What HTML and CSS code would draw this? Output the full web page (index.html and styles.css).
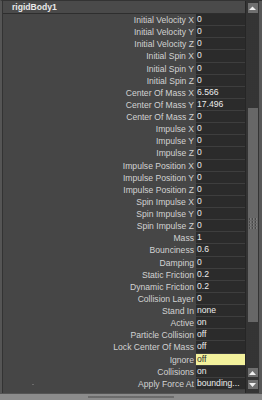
FILE: index.html
```html
<!DOCTYPE html>
<html>
<head>
<meta charset="utf-8">
<link rel="stylesheet" href="styles.css">
</head>
<body>
<div class="panel">
  <div class="frame">
    <div class="main">
      <div class="header">rigidBody1</div>
      <div class="rows">
        <div class="row"><span class="label">Initial Velocity X</span><span class="value">0</span></div>
        <div class="row"><span class="label">Initial Velocity Y</span><span class="value">0</span></div>
        <div class="row"><span class="label">Initial Velocity Z</span><span class="value">0</span></div>
        <div class="row"><span class="label">Initial Spin X</span><span class="value">0</span></div>
        <div class="row"><span class="label">Initial Spin Y</span><span class="value">0</span></div>
        <div class="row"><span class="label">Initial Spin Z</span><span class="value">0</span></div>
        <div class="row"><span class="label">Center Of Mass X</span><span class="value">6.566</span></div>
        <div class="row"><span class="label">Center Of Mass Y</span><span class="value">17.496</span></div>
        <div class="row"><span class="label">Center Of Mass Z</span><span class="value">0</span></div>
        <div class="row"><span class="label">Impulse X</span><span class="value">0</span></div>
        <div class="row"><span class="label">Impulse Y</span><span class="value">0</span></div>
        <div class="row"><span class="label">Impulse Z</span><span class="value">0</span></div>
        <div class="row"><span class="label">Impulse Position X</span><span class="value">0</span></div>
        <div class="row"><span class="label">Impulse Position Y</span><span class="value">0</span></div>
        <div class="row"><span class="label">Impulse Position Z</span><span class="value">0</span></div>
        <div class="row"><span class="label">Spin Impulse X</span><span class="value">0</span></div>
        <div class="row"><span class="label">Spin Impulse Y</span><span class="value">0</span></div>
        <div class="row"><span class="label">Spin Impulse Z</span><span class="value">0</span></div>
        <div class="row"><span class="label">Mass</span><span class="value">1</span></div>
        <div class="row"><span class="label">Bounciness</span><span class="value">0.6</span></div>
        <div class="row"><span class="label">Damping</span><span class="value">0</span></div>
        <div class="row"><span class="label">Static Friction</span><span class="value">0.2</span></div>
        <div class="row"><span class="label">Dynamic Friction</span><span class="value">0.2</span></div>
        <div class="row"><span class="label">Collision Layer</span><span class="value">0</span></div>
        <div class="row"><span class="label">Stand In</span><span class="value">none</span></div>
        <div class="row"><span class="label">Active</span><span class="value">on</span></div>
        <div class="row"><span class="label">Particle Collision</span><span class="value">off</span></div>
        <div class="row"><span class="label">Lock Center Of Mass</span><span class="value">off</span></div>
        <div class="row"><span class="label">Ignore</span><span class="value value-hl">off</span></div>
        <div class="row"><span class="label">Collisions</span><span class="value">on</span></div>
        <div class="row"><span class="label">Apply Force At</span><span class="value">bounding...</span></div>
      </div>
      <div class="dot"></div>
    </div>
    <div class="scrollbar">
      <div class="sb-btn sb-top"><svg width="7" height="5" viewBox="0 0 7 5"><path d="M0 4h7L3.5 0.5z" fill="#f0f0f0"/></svg></div>
      <div class="thumb">
        <div class="grip">
          <i></i><i></i><i></i><i></i><i></i><i></i>
          <i></i><i></i><i></i><i></i><i></i><i></i>
        </div>
      </div>
      <div class="sb-space"></div>
      <div class="sb-btn sb-up"><svg width="7" height="4" viewBox="0 0 7 4"><path d="M0 4h7L3.5 0z" fill="#f0f0f0"/></svg></div>
      <div class="sb-btn sb-down"><svg width="7" height="4" viewBox="0 0 7 4"><path d="M0 0h7L3.5 4z" fill="#f0f0f0"/></svg></div>
    </div>
  </div>
  <div class="bottom"><div class="bottom-grip"></div></div>
</div>
</body>
</html>
```
FILE: styles.css
```css
html, body {
  margin: 0;
  padding: 0;
  background: #3c3c3c;
}
.panel {
  width: 262px;
  height: 400px;
  display: flex;
  flex-direction: column;
  font-family: "Liberation Sans", Arial, sans-serif;
  font-size: 8.6px;
  overflow: hidden;
}
.frame {
  flex: 1;
  display: flex;
  background: #464646;
  border-left: 2px solid #555;
  border-top: 1px solid #333;
}
.main {
  flex: 1;
  display: flex;
  flex-direction: column;
  border-left: 1px solid #333;
  position: relative;
}
.header {
  height: 12px;
  line-height: 12px;
  padding-left: 9px;
  font-weight: bold;
  color: #e8e8e8;
  background: #4a4a4a;
  border-bottom: 1px solid #2e2e2e;
}
.rows {
  display: flex;
  flex-direction: column;
}
.row {
  height: 12.14px;
  display: grid;
  grid-template-columns: 1fr 49px;
  column-gap: 2px;
  align-items: stretch;
}
.label {
  text-align: right;
  color: #d2d2d2;
  line-height: 12px;
  white-space: nowrap;
}
.value {
  background: #2b2b2b;
  border-bottom: 1px solid #3e3e3e;
  color: #ececec;
  line-height: 11px;
  padding-left: 1px;
  white-space: nowrap;
  overflow: hidden;
}
.value-hl {
  background: #f3f19c;
  color: #2a2a2a;
}
.dot {
  position: absolute;
  left: 29px;
  bottom: 8px;
  width: 2px;
  height: 1px;
  background: #6a6a6a;
}
.scrollbar {
  width: 13px;
  display: flex;
  flex-direction: column;
  align-items: center;
  padding-top: 2px;
  padding-bottom: 4px;
  border-left: 1px solid #262626;
  border-right: 3px solid #575757;
  background-color: #3a3a3a;
  background-image: radial-gradient(circle, #2e2e2e 0.6px, transparent 0.8px);
  background-size: 2px 2px;
}
.sb-btn {
  width: 10px;
  height: 9px;
  background: #6f6f6f;
  display: flex;
  align-items: center;
  justify-content: center;
}
.sb-btn svg { display: block; }
.sb-top {
  height: 10px;
}
.thumb {
  margin-top: 95px;
  width: 10px;
  height: 214px;
  background: #676767;
  display: flex;
  align-items: center;
  justify-content: center;
}
.grip {
  margin-top: 16px;
  display: grid;
  grid-template-columns: repeat(3, 2px);
  grid-auto-rows: 2px;
  gap: 1px;
}
.grip i {
  display: block;
  background: #4a4a4a;
  border-right: 1px solid #7c7c7c;
  width: 1px;
}
.sb-space {
  flex: 1;
}
.sb-up {
  margin-bottom: 3px;
}
.bottom {
  height: 6px;
  background: #8c8c8c;
  border-top: 1px solid #555;
  display: flex;
  justify-content: center;
  align-items: center;
}
.bottom-grip {
  width: 86px;
  height: 2px;
  background-image: radial-gradient(circle, #5a5a5a 0.6px, transparent 0.9px);
  background-size: 2px 2px;
}
```
